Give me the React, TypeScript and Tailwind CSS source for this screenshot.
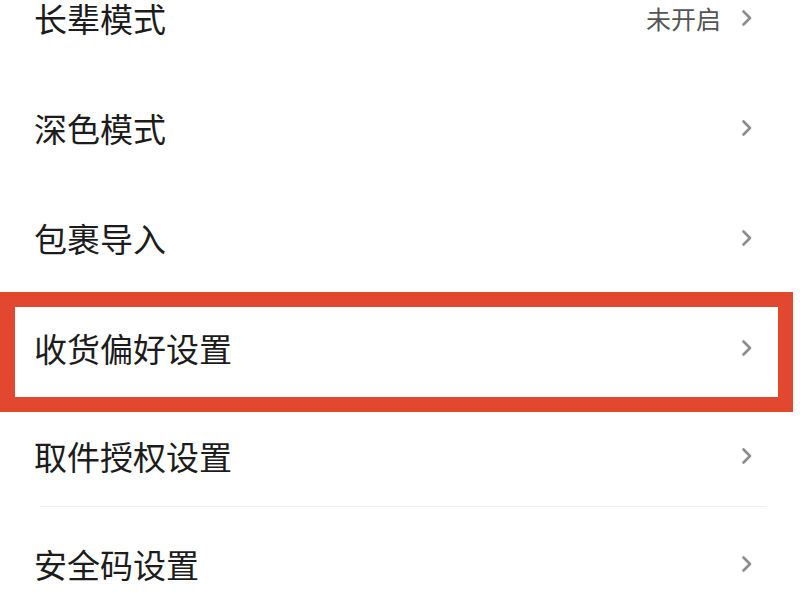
const font = { fontFamily: '"Noto Sans CJK SC", "Noto Sans", sans-serif' };

function Chevron() {
  return (
    <svg width="12" height="18" viewBox="0 0 12 18" className="shrink-0">
      <polyline points="2.5,2.5 9,9 2.5,15.5" fill="none" stroke="#8c8c8c" strokeWidth="2.6" strokeLinecap="round" strokeLinejoin="round" />
    </svg>
  );
}

type Item = { label: string; value?: string; highlight?: boolean; divider?: boolean };

const items: Item[] = [
  { label: '长辈模式', value: '未开启' },
  { label: '深色模式' },
  { label: '包裹导入' },
  { label: '收货偏好设置', highlight: true },
  { label: '取件授权设置', divider: true },
  { label: '安全码设置' },
];

function Row({ item }: { item: Item }) {
  return (
    <div className={`relative ${item.divider ? 'h-[106px]' : 'h-[110px]'}`}>
      <div className="flex h-full items-center justify-between pl-[34px] pr-[47px]">
        <span className="text-[33px] leading-none text-[#1c1c1c]">{item.label}</span>
        <div className="flex items-center gap-[20px]">
          {item.value && <span className="text-[25px] leading-none text-[#555]">{item.value}</span>}
          <Chevron />
        </div>
      </div>
      {item.divider && <div className="absolute bottom-[2px] left-[40px] right-[33px] h-px bg-[#efefef]" />}
      {item.highlight && (
        <div className="pointer-events-none absolute -top-[1px] -bottom-[9px] left-0 right-[7px] border-[15px] border-[#e2472f]" />
      )}
    </div>
  );
}

export default function App() {
  return (
    <div className="h-[600px] w-[800px] overflow-hidden bg-white" style={font}>
      <div className="-mt-[37px]">
        {items.map((it) => (
          <Row key={it.label} item={it} />
        ))}
      </div>
    </div>
  );
}
